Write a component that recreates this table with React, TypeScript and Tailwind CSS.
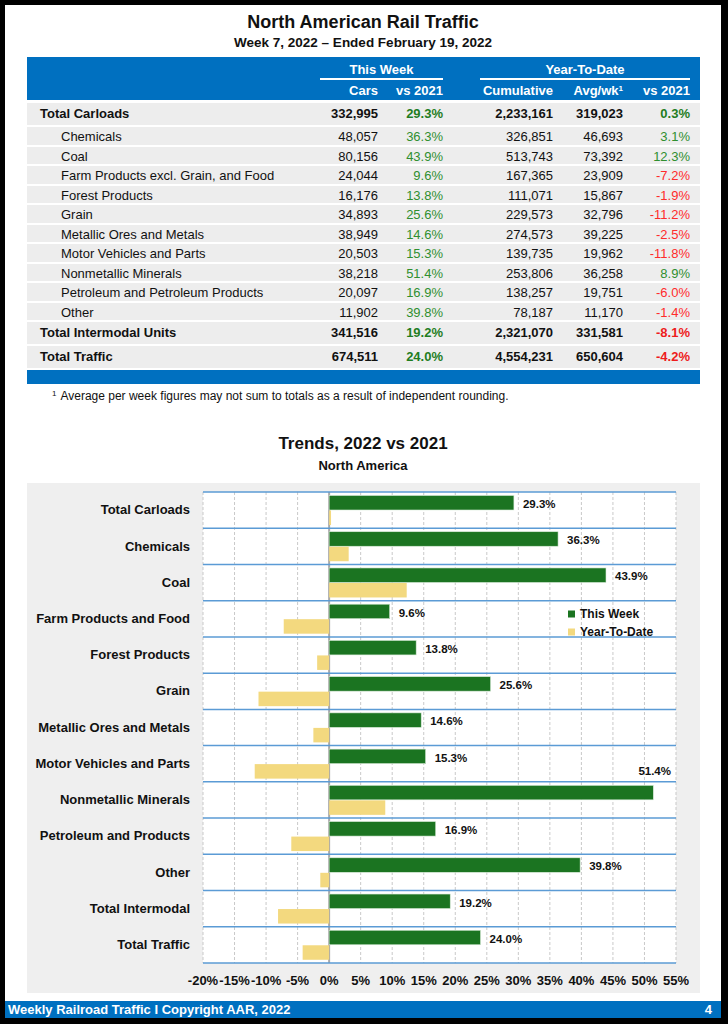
import React from "react";

type Row = {
  label: string;
  cars: string;
  wk: string;
  cum: string;
  avg: string;
  ytd: string;
  total?: boolean;
};

const rows: Row[] = [
  { label: "Total Carloads", cars: "332,995", wk: "29.3%", cum: "2,233,161", avg: "319,023", ytd: "0.3%", total: true },
  { label: "Chemicals", cars: "48,057", wk: "36.3%", cum: "326,851", avg: "46,693", ytd: "3.1%" },
  { label: "Coal", cars: "80,156", wk: "43.9%", cum: "513,743", avg: "73,392", ytd: "12.3%" },
  { label: "Farm Products excl. Grain, and Food", cars: "24,044", wk: "9.6%", cum: "167,365", avg: "23,909", ytd: "-7.2%" },
  { label: "Forest Products", cars: "16,176", wk: "13.8%", cum: "111,071", avg: "15,867", ytd: "-1.9%" },
  { label: "Grain", cars: "34,893", wk: "25.6%", cum: "229,573", avg: "32,796", ytd: "-11.2%" },
  { label: "Metallic Ores and Metals", cars: "38,949", wk: "14.6%", cum: "274,573", avg: "39,225", ytd: "-2.5%" },
  { label: "Motor Vehicles and Parts", cars: "20,503", wk: "15.3%", cum: "139,735", avg: "19,962", ytd: "-11.8%" },
  { label: "Nonmetallic Minerals", cars: "38,218", wk: "51.4%", cum: "253,806", avg: "36,258", ytd: "8.9%" },
  { label: "Petroleum and Petroleum Products", cars: "20,097", wk: "16.9%", cum: "138,257", avg: "19,751", ytd: "-6.0%" },
  { label: "Other", cars: "11,902", wk: "39.8%", cum: "78,187", avg: "11,170", ytd: "-1.4%" },
  { label: "Total Intermodal Units", cars: "341,516", wk: "19.2%", cum: "2,321,070", avg: "331,581", ytd: "-8.1%", total: true },
  { label: "Total Traffic", cars: "674,511", wk: "24.0%", cum: "4,554,231", avg: "650,604", ytd: "-4.2%", total: true },
];

const trends = [
  { label: "Total Carloads", wk: 29.3, ytd: 0.3 },
  { label: "Chemicals", wk: 36.3, ytd: 3.1 },
  { label: "Coal", wk: 43.9, ytd: 12.3 },
  { label: "Farm Products and Food", wk: 9.6, ytd: -7.2 },
  { label: "Forest Products", wk: 13.8, ytd: -1.9 },
  { label: "Grain", wk: 25.6, ytd: -11.2 },
  { label: "Metallic Ores and Metals", wk: 14.6, ytd: -2.5 },
  { label: "Motor Vehicles and Parts", wk: 15.3, ytd: -11.8 },
  { label: "Nonmetallic Minerals", wk: 51.4, ytd: 8.9 },
  { label: "Petroleum and Products", wk: 16.9, ytd: -6.0 },
  { label: "Other", wk: 39.8, ytd: -1.4 },
  { label: "Total Intermodal", wk: 19.2, ytd: -8.1 },
  { label: "Total Traffic", wk: 24.0, ytd: -4.2 },
];

const W = 473;
const H = 471;
const ROW = H / 13;
const px = (v: number) => ((v + 20) / 75) * W;
const ticks = Array.from({ length: 16 }, (_, i) => -20 + i * 5);

function pctColor(v: string, bold?: boolean) {
  if (v.startsWith("-")) return bold ? "text-[#ee1c1c]" : "text-[#ff2b2b]";
  return bold ? "text-[#1f7d1f]" : "text-[#2f8f2f]";
}

function TrendPlot() {
  const zero = px(0);
  return (
    <svg width={W} height={H + 30} className="overflow-visible">
      {ticks.map((t) =>
        t === 0 ? null : (
          <line key={t} x1={px(t)} x2={px(t)} y1={0} y2={H} stroke="#c9c9c9" strokeDasharray="3 2" strokeWidth={1} />
        )
      )}
      <line x1={zero} x2={zero} y1={0} y2={H} stroke="#a9a9a9" strokeWidth={2} />
      {Array.from({ length: 14 }, (_, i) => (
        <line key={i} x1={0} x2={W} y1={i * ROW} y2={i * ROW} stroke="#5b9bd5" strokeWidth={1.5} />
      ))}
      {trends.map((d, i) => {
        const top = i * ROW;
        const g = px(d.wk);
        const y = px(d.ytd);
        const big = d.wk > 50;
        return (
          <g key={d.label}>
            <rect x={zero} y={top + 3.5} width={g - zero} height={14.5} fill="#1b7421" stroke="#d8ead8" strokeWidth={0.6} />
            <rect
              x={Math.min(zero, y)}
              y={top + 18.5}
              width={Math.max(Math.abs(y - zero), 1.5)}
              height={14.5}
              fill="#f3d97f"
            />
            <text
              x={big ? 468 : g + 9}
              y={big ? top - 6.5 : top + 16}
              textAnchor={big ? "end" : "start"}
              fontSize={11.5}
              fontWeight={700}
              fill="#111"
            >
              {d.wk.toFixed(1)}%
            </text>
          </g>
        );
      })}
      <rect x={365} y={118.5} width={7} height={7} fill="#1b7421" />
      <text x={377} y={126} fontSize={12} fontWeight={700} fill="#111">This Week</text>
      <rect x={365} y={136.5} width={7} height={7} fill="#f3d97f" />
      <text x={377} y={144} fontSize={12} fontWeight={700} fill="#111">Year-To-Date</text>
      {ticks.map((t) => (
        <text key={t} x={px(t)} y={H + 22} textAnchor="middle" fontSize={13} fontWeight={700} fill="#111">
          {t}%
        </text>
      ))}
    </svg>
  );
}

export default function App() {
  return (
    <div className="w-[728px] h-[1024px] bg-black pt-[5px] pl-[5px] pr-[7px] pb-[6px] font-['Liberation_Sans',Arial,sans-serif] text-[#111]">
      <div className="flex h-full flex-col bg-white">
        <h1 className="mt-[6px] text-center text-[18px] font-bold leading-[22px]">North American Rail Traffic</h1>
        <p className="mt-[2px] text-center text-[13.5px] font-bold leading-[16px]">Week 7, 2022 – Ended February 19, 2022</p>

        <div className="mx-[22px] mt-[6px] w-[673px]">
          <div className="h-[43px] bg-[#0070c0] pt-[5px] text-[13px] font-bold text-white">
            <div className="grid h-[18px] grid-cols-[293px_58px_65px_37px_73px_70px_67px_10px] leading-[16px]">
              <div />
              <div className="col-span-2 border-b-2 border-white text-center">This Week</div>
              <div />
              <div className="col-span-3 border-b-2 border-white text-center">Year-To-Date</div>
              <div />
            </div>
            <div className="mt-[2px] grid h-[17px] grid-cols-[293px_58px_65px_37px_73px_70px_67px_10px] leading-[17px]">
              <div />
              <div className="text-right">Cars</div>
              <div className="text-right">vs 2021</div>
              <div />
              <div className="text-right">Cumulative</div>
              <div className="text-right">
                Avg/wk<sup className="text-[8px]">1</sup>
              </div>
              <div className="text-right">vs 2021</div>
              <div />
            </div>
          </div>

          <div className="mt-[3px] flex flex-col gap-[2px]">
            {rows.map((r) => (
              <div
                key={r.label}
                className={`grid grid-cols-[293px_58px_65px_37px_73px_70px_67px_10px] items-center bg-[#ededed] text-[13px] ${
                  r.total ? "h-[22px] font-bold" : "h-[17.5px]"
                }`}
              >
                <div className={r.total ? "pl-[13px]" : "pl-[34px]"}>{r.label}</div>
                <div className="text-right">{r.cars}</div>
                <div className={`text-right ${pctColor(r.wk, r.total)}`}>{r.wk}</div>
                <div />
                <div className="text-right">{r.cum}</div>
                <div className="text-right">{r.avg}</div>
                <div className={`text-right ${pctColor(r.ytd, r.total)}`}>{r.ytd}</div>
                <div />
              </div>
            ))}
          </div>
          <div className="mt-[2px] h-[14px] bg-[#0070c0]" />
        </div>

        <p className="ml-[47px] mt-[5px] text-[12px] leading-[14px]">
          <sup className="mr-[4px] text-[8px]">1</sup>
          Average per week figures may not sum to totals as a result of independent rounding.
        </p>

        <h2 className="mt-[31px] text-center text-[17px] font-bold leading-[20px]">Trends, 2022 vs 2021</h2>
        <p className="mt-[4px] text-center text-[13px] font-bold leading-[16px]">North America</p>

        <div className="mx-[22px] mt-[9px] flex h-[510px] w-[673px] bg-[#efefef] pt-[9px]">
          <div className="flex w-[176px] flex-col">
            {trends.map((d) => (
              <div key={d.label} className="flex h-[36.23px] items-center justify-end pr-[13px] text-[13px] font-bold">
                {d.label}
              </div>
            ))}
          </div>
          <div className="bg-white h-[471px]">
            <TrendPlot />
          </div>
        </div>

        <div className="mt-auto flex h-[17px] items-center justify-between bg-[#0070c0] pl-[3px] pr-[9px] text-[13px] font-bold text-white">
          <span>Weekly Railroad Traffic I Copyright AAR, 2022</span>
          <span>4</span>
        </div>
      </div>
    </div>
  );
}
